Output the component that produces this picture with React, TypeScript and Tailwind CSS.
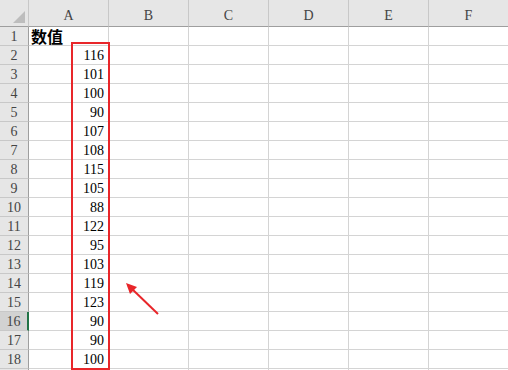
const cols = ["A", "B", "C", "D", "E", "F"];
const values = [116, 101, 100, 90, 107, 108, 115, 105, 88, 122, 95, 103, 119, 123, 90, 90, 100];

const font = { fontFamily: '"Liberation Serif", "Noto Sans CJK SC", serif' };

export default function App() {
  const rows = Array.from({ length: 19 }, (_, i) => i + 1);
  return (
    <div className="relative w-[508px] h-[370px] overflow-hidden bg-white" style={font}>
      <div className="grid grid-cols-[29px_repeat(6,80px)] grid-rows-[27px_repeat(19,19px)] text-[14px]">
        {/* header row */}
        <div className="relative bg-[#e6e6e6] border-r border-b border-r-[#c8c8c8] border-b-[#9e9e9e]">
          <svg className="absolute right-[3px] bottom-[3px]" width="12" height="12" viewBox="0 0 12 12">
            <polygon points="12,0 12,12 0,12" fill="#bdbdbd" />
          </svg>
        </div>
        {cols.map((c) => (
          <div
            key={c}
            className="flex items-center justify-center bg-[#e6e6e6] border-r border-b border-r-[#c8c8c8] border-b-[#9e9e9e] text-[#444] pt-[5px]"
          >
            {c}
          </div>
        ))}

        {rows.map((r) => (
          <Row key={r} r={r} />
        ))}
      </div>

      {/* red highlight box */}
      <div className="absolute left-[71px] top-[42px] w-[39px] h-[328px] border-2 border-[#e8262a]" />

      {/* arrow */}
      <svg className="absolute left-0 top-0" width="508" height="370">
        <line x1="158" y1="314" x2="131" y2="288" stroke="#e8262a" strokeWidth="2" />
        <polygon points="126,283 137,287 130,294" fill="#e8262a" />
      </svg>
    </div>
  );
}

function Row({ r }: { r: number }) {
  const selected = r === 16;
  const v = r >= 2 && r <= 18 ? values[r - 2] : undefined;
  return (
    <>
      <div
        className={
          selected
            ? "flex items-center justify-center bg-[#d2d2d2] border-r-2 border-b border-r-[#217346] border-b-[#c8c8c8] text-[#444]"
            : "flex items-center justify-center bg-[#e6e6e6] border-r border-b border-r-[#9e9e9e] border-b-[#c8c8c8] text-[#444]"
        }
      >
        {r <= 18 ? r : null}
      </div>
      <div className="flex items-center justify-end pr-[4px] border-r border-b border-[#d4d4d4] text-black">
        {r === 1 ? (
          <span
            className="mr-auto pl-[2px] font-bold text-[16px] leading-none"
            style={{ fontFamily: '"Noto Sans CJK SC", sans-serif' }}
          >
            数值
          </span>
        ) : (
          v
        )}
      </div>
      {cols.slice(1).map((c) => (
        <div key={c} className="border-r border-b border-[#d4d4d4]" />
      ))}
    </>
  );
}
